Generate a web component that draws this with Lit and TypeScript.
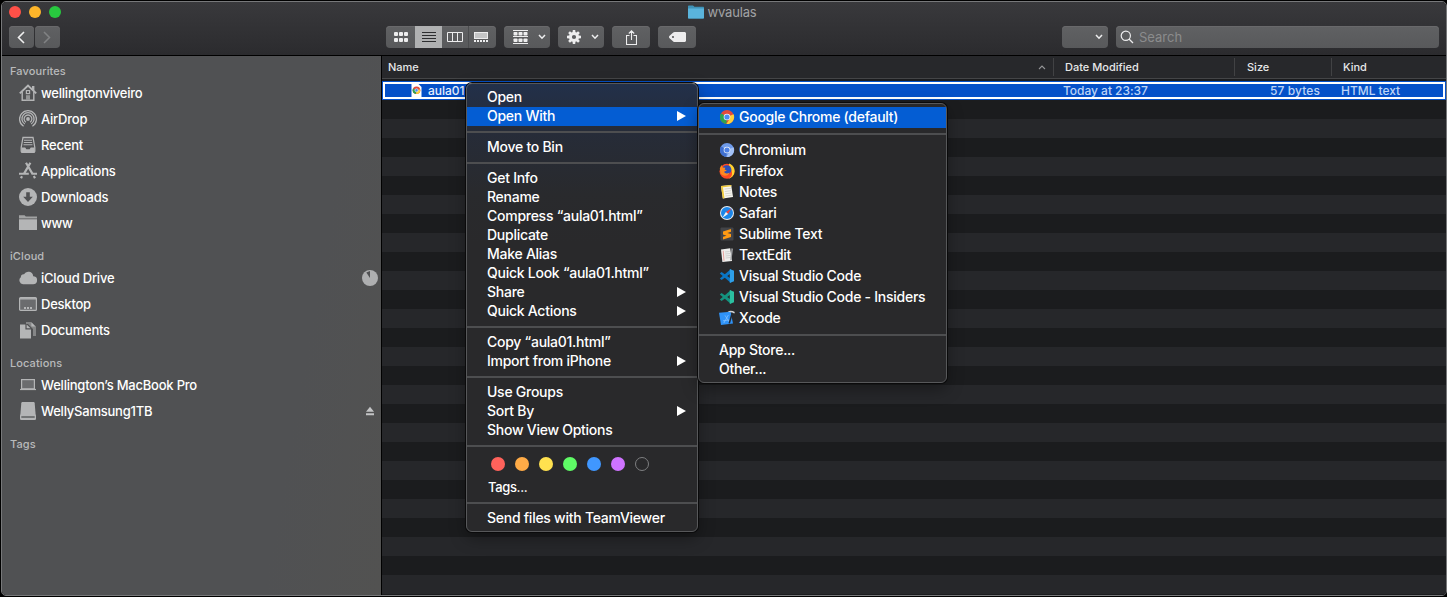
import { LitElement, html, svg, css, nothing, TemplateResult } from "lit";
import { customElement, property } from "lit/decorators.js";
import { classMap } from "lit/directives/class-map.js";

const icon = (w: number, h: number, body: unknown) =>
  html`<svg width=${w} height=${h} viewBox="0 0 ${w} ${h}" fill="none">${body}</svg>`;

const G = "#b4b5b6";

const side: Record<string, TemplateResult> = {
  home: icon(18, 18, svg`<path d="M.8 9.400 9 1.600l8.200 7.800" stroke=${G} stroke-width="2"/><path d="M13 4.800V2h2.400v5" fill=${G}/><path d="M3.200 8v8.300h11.600V8" stroke=${G} stroke-width="1.400"/><rect x="7.400" y="6.600" width="3.200" height="3" stroke=${G} stroke-width="1.200"/><rect x="7" y="11.200" width="4" height="5" fill="#939495"/>`),
  airdrop: icon(18, 18, svg`<g stroke=${G} stroke-width="1.300"><path d="M4.600 16.200a8.400 8.400 0 1 1 8.800 0"/><path d="M5.800 14a6.100 6.100 0 1 1 6.400 0"/><path d="M6.900 12.200a3.900 3.900 0 1 1 4.200 0"/></g><circle cx="9" cy="9" r="1.900" fill=${G}/><path d="m9 10.500 2.400 5.600H6.600z" fill="#505153"/>`),
  recent: icon(18, 18, svg`<path d="M4 1.500h10l1.800 10v3.600a1.200 1.200 0 0 1-1.200 1.200H3.400a1.200 1.200 0 0 1-1.200-1.200v-3.600z" stroke=${G} stroke-width="1.300"/><path d="M5 4.300h8M4.800 6.500h8.400M4.500 8.700h9" stroke=${G} stroke-width="1.100"/><path d="M2.400 11.400h3.800l1.200 1.800h3.200l1.200-1.800h3.800v4.800H2.400z" fill=${G}/>`),
  apps: icon(18, 18, svg`<g stroke=${G} stroke-width="2.200"><path d="m7 .8 6.800 11.600M14.800 14l1.200 2.200M11.400.8 5.200 11.400M3 14.200l-1 2"/><path d="M0 11.700h9.800M13.400 11.700H18" stroke-width="2"/></g>`),
  down: icon(18, 18, svg`<circle cx="9" cy="9" r="9" fill=${G}/><path d="M7.200 4.200h3.600v4.600h3L9 14 4.200 8.800h3z" fill="#505153"/>`),
  folder: icon(18, 18, svg`<path d="M0 1.300h5.600l1.200 1.300H18v2H0z" fill="#a2a3a4"/><path d="M0 5.300h18v10.700H0z" fill=${G}/>`),
  cloud: icon(18, 18, svg`<path d="M4 15.200a4 4 0 0 1-2.200-7A3 3 0 0 1 5 5.300a4.900 4.900 0 0 1 9.200 1.900 4 4 0 0 1-.2 8z" fill=${G}/>`),
  desktop: icon(18, 18, svg`<rect x=".6" y="2.600" width="16.800" height="12.800" rx="1" stroke=${G} stroke-width="1.200" fill="#6b6c6e"/><path d="M1 3.800h16" stroke=${G} stroke-width="1.400"/><path d="M5 12.900h2M8 12.900h2M11 12.900h2" stroke=${G} stroke-width="2"/>`),
  docs: icon(18, 18, svg`<path d="M7 1h5l5 4.400V15h-3V8L9 3H7z" fill="#858687"/><path d="M12.400 1.200v4.200h4z" fill=${G}/><path d="M1 3.400h5.400v5H12V17.400H1z" fill=${G}/><path d="M7.600 3.400v3.800h4z" fill=${G}/>`),
  laptop: icon(18, 18, svg`<rect x="2.600" y="3.600" width="12.800" height="9.200" stroke=${G} stroke-width="1.200" fill="#6b6c6e"/><path d="M1 13.500h16" stroke=${G} stroke-width="1.200"/>`),
  drive: icon(18, 18, svg`<path d="M3.600 0h10.800c.8 0 1.200.4 1.300 1.200l1.100 13.300H1.200L2.300 1.200C2.400.4 2.800 0 3.600 0z" fill=${G}/><rect x="1" y="12.500" width="16" height="5.500" rx="1.200" fill=${G}/><path d="M2.300 14.300h13.400v1.400H2.300z" fill="#58595b"/>`),
};

const chrome = (a: string, b: string, c: string, d: string) => icon(16, 16, svg`
  <circle cx="8" cy="8" r="7" fill=${a}/>
  <path d="M8 8 1.900 4.500A7 7 0 0 0 7.400 15z" fill=${b}/>
  <path d="M8 8 14.600 5.300A7 7 0 0 1 7.400 15L10.800 9.500z" fill=${c}/>
  <path d="M8 8 1.900 4.500 4.800 9.600z" fill=${b}/>
  <circle cx="8" cy="8" r="3.300" fill="#f3f6fb"/><circle cx="8" cy="8" r="2.600" fill=${d}/>`);

const vs = (a: string, b: string) => icon(16, 16, svg`<path d="M.8 5.400 2.600 3.900 12 10.800V15z" fill=${a}/><path d="M.8 10.600 2.600 12.100 12 5.200V1z" fill=${a}/><path d="M10.800 1 15 2.800v10.400L10.800 15z" fill=${b}/>`);

const app: Record<string, TemplateResult> = {
  chrome: chrome("#e24a3b", "#2da451", "#fdd03c", "#4a8cf0"),
  chromium: chrome("#6f9bea", "#3f6fd0", "#a3c2f7", "#4b80e6"),
  firefox: icon(16, 16, svg`<circle cx="8" cy="8.300" r="7.500" fill="#ff4a22"/><path d="M10 .6c3.600 1 5.700 4.200 5.600 7.600A7.500 7.500 0 0 1 8 15.800c4-.5 5.600-3 4.800-7C12.400 5.500 9.800 4 10 .6z" fill="#ffd12e"/><circle cx="7.800" cy="6.800" r="4.600" fill="#2c4fb8"/><path d="M.8 5.500 2.400 2l1.200 2.600 2.800.2-.8 1.800 2.300.8-2.800 1.400c.8 2.300 3.800 2 5.400.7-.6 3.700-7 4.600-9 .8z" fill="#ff8a1f"/>`),
  notes: icon(16, 16, svg`<path d="m2 2.100 10.200-1.200L14 13.100 3.800 14.500z" fill="#f7f6ef"/><path d="m2 2.100 1.800-.2L5.500 14.200 3.800 14.500zM2 2.100l10.200-1.200.2 1.400L2.200 3.500z" fill="#f0c936"/><path d="m5.500 5.100 6.400-.8M5.800 7.500l6.400-.8M6.100 9.800l6.400-.8M6.400 12l6.400-.8" stroke="#c9c8c2" stroke-width=".7"/>`),
  safari: icon(16, 16, svg`<circle cx="8" cy="8" r="7" fill="#e8edf2"/><circle cx="8" cy="8" r="6" fill="#1c86e8"/><path d="m12.600 3.300-3.500 5.700-2.200-2.100z" fill="#f0433a"/><path d="m3.400 12.700 3.500-5.800 2.200 2.100z" fill="#f4f4f4"/>`),
  sublime: icon(16, 16, svg`<rect x="1.500" y="1.500" width="13" height="13" rx="1" fill="#434448"/><path d="m12 3-8 2.500v3l3.600 1.200L4 10.800v2.800l8-2.500V8L8.400 6.900 12 5.800z" fill="#ff9a14"/>`),
  textedit: icon(16, 16, svg`<path d="m2 2.600 9.200-1.400L13 14 3.400 15z" fill="#eeeeec"/><path d="m4.200 3.800.8 10" stroke="#e49a94" stroke-width=".9"/><path d="m6 5 4.600-.5M6.200 7l4.800-.5M6.400 9l4.800-.5M6.600 11l4.800-.5" stroke="#c2c2c2" stroke-width=".7"/><path d="m12.400 1.200 1.600.5-1.400 10.600-1.300 1.200z" fill="#9c9d9f"/>`),
  code: vs("#0a76c4", "#2e9fe8"),
  insiders: vs("#15937f", "#2bc0a0"),
  xcode: icon(16, 16, svg`<path d="M0 2.800 11.600 1.800 14 13.600 2 15z" fill="#2f93f8"/><path d="m4.800 13 4.600-8M6 5.400l4.600 7M4 10.800l7.600-1" stroke="#8cc6ff" stroke-width=".7"/><path d="M8.500 1.600C11 .2 13.500.6 15.800 2l-.4 1.400-2-.6z" fill="#d0d2d4"/><path d="m12.600 2.400 1.500.5L11 13.500l-1.500-.3z" fill="#222a36"/>`),
};

@customElement("finder-sidebar")
class FinderSidebar extends LitElement {
  static styles = css`
    :host { display: block; width: 379px; flex: none; background: linear-gradient(100deg, #505153 75%, #525251); border-right: 1px solid #000; box-sizing: content-box; }
    svg { display: block; flex: none; }
    .head { height: 29px; box-sizing: border-box; padding: 13px 0 0 8px; font-size: 11px; line-height: 14px; font-weight: 500; color: #b9babb; letter-spacing: .1px; }
    .head.first { height: 24px; padding-top: 8px; }
    .item { height: 26px; display: flex; align-items: center; padding: 0 3px 0 17px; gap: 4px; font-size: 13px; font-weight: 550; color: #fff; letter-spacing: -.22px; }
    .label { flex: 1; white-space: nowrap; }
    .eject { margin-right: 3px; }
  `;
  render() {
    const groups: [string, [string, string][]][] = [
      ["Favourites", [["home", "wellingtonviveiro"], ["airdrop", "AirDrop"], ["recent", "Recent"], ["apps", "Applications"], ["down", "Downloads"], ["folder", "www"]]],
      ["iCloud", [["cloud", "iCloud Drive"], ["desktop", "Desktop"], ["docs", "Documents"]]],
      ["Locations", [["laptop", "Wellington’s MacBook Pro"], ["drive", "WellySamsung1TB"]]],
      ["Tags", []],
    ];
    return groups.map(([name, items], i) => html`
      <div class=${classMap({ head: true, first: i === 0 })}>${name}</div>
      ${items.map(([ic, label]) => html`<div class="item">${side[ic]}<span class="label">${label}</span>
        ${ic === "cloud" ? icon(16, 16, svg`<circle cx="8" cy="8" r="8" fill="#aeafb0"/><path d="M8 8V1L4.300 2.400z" fill="#505153"/>`) : nothing}
        ${ic === "drive" ? html`<span class="eject">${icon(10, 10, svg`<path d="M5 .8 9 5.800H1zM1 7.200h8v2H1z" fill="#c4c5c6"/>`)}</span>` : nothing}
      </div>`)}`);
  }
}

interface Entry { label?: string; sep?: boolean; arrow?: boolean; on?: boolean; icon?: string; tags?: boolean; }

@customElement("finder-menu")
class FinderMenu extends LitElement {
  @property({ attribute: false }) entries: Entry[] = [];
  static styles = css`
    :host { display: block; box-sizing: border-box; border: 1px solid #57585a; border-radius: 6px; padding: 4px 0 3px; background: #29292b; box-shadow: 0 0 0 1px #0a0a0b, 0 6px 16px rgba(0,0,0,.35); color: #fff; font-size: 14px; font-weight: 500; }
    :host(.main) { background: linear-gradient(#22304a, #262c39 45px, #292a2d 110px, #29292b 160px); }
    :host(.sub) { padding-top: 3px; }
    svg { display: block; flex: none; }
    .row { height: 19px; padding: 0 11px 0 20px; display: flex; align-items: center; white-space: nowrap; letter-spacing: -.26px; }
    .row.app { height: 21px; gap: 4px; }
    .row.app svg { margin-bottom: 1px; }
    .row.on { background: #045dd3; }
    .label { flex: 1; padding-bottom: 2px; }
    .sep { height: 12px; display: flex; align-items: center; }
    .sep::before { content: ""; flex: 1; height: 2px; background: #4d4e50; }
    .dots { height: 24px; display: flex; align-items: center; gap: 10px; padding-left: 24px; }
    .dot { width: 14px; height: 14px; border-radius: 50%; box-sizing: border-box; }
    .red { background: #ff625b; } .orange { background: #ffab47; } .yellow { background: #ffe14f; } .green { background: #5ffb66; } .blue { background: #4097ff; } .purple { background: #cf73ff; }
    .none { border: 1px solid #7d7e80; }
    .tags { height: 21px; padding: 0 0 0 21px; display: flex; align-items: center; font-size: 13px; letter-spacing: -.35px; }
  `;
  render() {
    return this.entries.map((e) => e.sep ? html`<div class="sep"></div>`
      : e.tags ? html`<div class="dots">${["red", "orange", "yellow", "green", "blue", "purple", "none"].map((c) => html`<span class="dot ${c}"></span>`)}</div><div class="tags">Tags...</div>`
      : html`<div class=${classMap({ row: true, app: !!e.icon, on: !!e.on })}>
          ${e.icon ? app[e.icon] : nothing}<span class="label">${e.label}</span>
          ${e.arrow ? icon(9, 11, svg`<path d="M0 0v10l9-5z" fill="#fff"/>`) : nothing}</div>`);
  }
}

@customElement("app-root")
class AppRoot extends LitElement {
  static styles = css`
    :host { display: block; position: relative; width: 1447px; height: 597px; box-sizing: border-box; overflow: hidden; background: #000; padding: 1px 0 1px 1px; font-family: Inter, "Liberation Sans", sans-serif; }
    svg { display: block; flex: none; }
    .window { height: 595px; box-sizing: border-box; display: flex; flex-direction: column; border: 1px solid #77787a; border-radius: 5px; overflow: hidden; }
    .bar { height: 54px; box-sizing: border-box; flex: none; background: linear-gradient(#39393c, #2b2b2e); border-bottom: 1px solid #000; display: flex; flex-direction: column; }
    .titlebar { height: 20px; display: grid; grid-template-columns: 1fr auto 1fr; align-items: center; padding: 0 11px 0 7px; }
    .lights { display: flex; gap: 8px; }
    .light { width: 12px; height: 12px; border-radius: 50%; }
    .close { background: #ff5048; } .min { background: #fdb52a; } .max { background: #28c83f; }
    .title { display: flex; align-items: center; gap: 4px; font-size: 13px; color: #a2a3a5; letter-spacing: -.2px; }
    .tools { display: flex; align-items: center; padding: 4px 7px 0 7px; height: 22px; }
    .btn { height: 22px; box-sizing: border-box; border-radius: 4px; background: linear-gradient(#606163, #58595b); display: flex; align-items: center; justify-content: center; box-shadow: inset 0 1px #69696b; }
    .nav { width: 25px; margin-right: 1px; }
    .nav svg { margin-right: 1px; }
    .views { margin-left: 325px; width: 110px; overflow: hidden; }
    .seg { height: 22px; display: flex; align-items: center; justify-content: center; width: 27px; box-sizing: border-box; }
    .seg.first { width: 29px; } .seg.sel { background: #b0b1b2; } .seg.line { border-right: 1px solid #4b4c4e; } .seg.last { padding-right: 3px; }
    .drop { width: 46px; margin-left: 8px; gap: 10px; justify-content: flex-start; padding-left: 9px; }
    .wide { width: 38px; margin-left: 8px; }
    .filter { width: 46px; margin-left: auto; justify-content: flex-end; padding-right: 5px; }
    .search { width: 323px; margin-left: 8px; justify-content: flex-start; gap: 5px; padding-left: 4px; color: #8b8c8d; font-size: 13px; }
    .body { flex: 1; display: flex; min-height: 0; }
    .list { flex: 1; min-width: 0; display: flex; flex-direction: column; background: #1b1c1e; }
    .cols { height: 23px; box-sizing: border-box; flex: none; background: #27282b; border-bottom: 1px solid #444547; display: flex; align-items: center; font-size: 11px; font-weight: 500; color: #e6e7e8; letter-spacing: .01px; }
    .col { height: 18px; box-sizing: border-box; display: flex; align-items: center; border-right: 1px solid #414244; }
    .name { width: 672px; padding: 0 7px 0 6px; justify-content: space-between; }
    .date { width: 181px; padding-left: 11px; }
    .size { width: 97px; padding-left: 12px; }
    .kind { padding-left: 11px; border: 0; }
    .rows { flex: 1; margin-top: 2px; background: repeating-linear-gradient(#26272a 0 19px, #1b1c1e 19px 38px); }
    .selected { height: 19px; box-sizing: border-box; border: 1px solid #0450c8; background: #0450c8; }
    .ring { height: 17px; box-sizing: border-box; border: 2px solid #fff; display: flex; align-items: center; overflow: hidden; color: #bcd4f7; font-size: 12px; font-weight: 500; letter-spacing: -.03px; line-height: 14px; white-space: nowrap; }
    .file { width: 678px; box-sizing: border-box; padding-left: 26px; display: flex; align-items: center; gap: 6px; color: #e6effd; }
    .when { width: 181px; }
    .bytes { width: 76px; text-align: right; letter-spacing: .1px; }
    .type { padding-left: 21px; }
    .menu { position: absolute; left: 466px; top: 83px; width: 232px; height: 449px; }
    .submenu { position: absolute; left: 698px; top: 103px; width: 249px; height: 280px; }
  `;
  render() {
    const W = "#ededee";
    const chev = icon(8, 6, svg`<path d="m1 1 3 3.200L7 1" stroke=${W} stroke-width="1.500"/>`);
    const s: Entry = { sep: true };
    const main: Entry[] = [
      { label: "Open" }, { label: "Open With", arrow: true, on: true }, s, { label: "Move to Bin" }, s,
      { label: "Get Info" }, { label: "Rename" }, { label: "Compress “aula01.html”" }, { label: "Duplicate" }, { label: "Make Alias" },
      { label: "Quick Look “aula01.html”" }, { label: "Share", arrow: true }, { label: "Quick Actions", arrow: true }, s,
      { label: "Copy “aula01.html”" }, { label: "Import from iPhone", arrow: true }, s,
      { label: "Use Groups" }, { label: "Sort By", arrow: true }, { label: "Show View Options" }, s,
      { tags: true }, s, { label: "Send files with TeamViewer" },
    ];
    const sub: Entry[] = [
      { label: "Google Chrome (default)", icon: "chrome", on: true }, s,
      { label: "Chromium", icon: "chromium" }, { label: "Firefox", icon: "firefox" }, { label: "Notes", icon: "notes" },
      { label: "Safari", icon: "safari" }, { label: "Sublime Text", icon: "sublime" }, { label: "TextEdit", icon: "textedit" },
      { label: "Visual Studio Code", icon: "code" }, { label: "Visual Studio Code - Insiders", icon: "insiders" }, { label: "Xcode", icon: "xcode" }, s,
      { label: "App Store..." }, { label: "Other..." },
    ];
    const teeth = [0, 45, 90, 135, 180, 225, 270, 315];
    return html`
      <div class="window">
        <div class="bar">
          <div class="titlebar">
            <div class="lights"><span class="light close"></span><span class="light min"></span><span class="light max"></span></div>
            <div class="title">${icon(16, 14, svg`<path d="M0 1.500C0 .8.400.5 1 .5h4l1.500 1.300H15c.6 0 1 .4 1 1V12.500c0 .6-.4 1-1 1H1c-.6 0-1-.4-1-1z" fill="#3f93b8"/><path d="M0 3.600h16v9c0 .6-.4 1-1 1H1c-.6 0-1-.4-1-1z" fill="#5ab4dc"/>`)}<span>wvaulas</span></div>
          </div>
          <div class="tools">
            <div class="btn nav">${icon(8, 13, svg`<path d="M7 1 1.500 6.500 7 12" stroke="#f0f0f0" stroke-width="1.600"/>`)}</div>
            <div class="btn nav">${icon(8, 13, svg`<path d="m1 1 5.500 5.500L1 12" stroke="#818284" stroke-width="1.500"/>`)}</div>
            <div class="btn views">
              <div class="seg first">${icon(14, 10, svg`${[0, 5, 10].map((x) => svg`<rect x=${x} y="0" width="4" height="4" rx="1" fill=${W}/><rect x=${x} y="6" width="4" height="4" rx="1" fill=${W}/>`)}`)}</div>
              <div class="seg sel">${icon(14, 10, svg`<path d="M0 .5h14M0 3.500h14M0 6.500h14M0 9.500h14" stroke="#2d2e30"/>`)}</div>
              <div class="seg line">${icon(16, 10, svg`<path d="M.5.5h15v9H.5zM5.500.5v9M10.500.5v9" stroke=${W}/>`)}</div>
              <div class="seg last">${icon(14, 10, svg`<rect x=".5" y=".5" width="13" height="6" fill="#c4c5c6" stroke=${W}/><path d="M0 9h14" stroke=${W} stroke-width="2" stroke-dasharray="2 1"/>`)}</div>
            </div>
            <div class="btn drop">${icon(15, 14, svg`<path d="M0 .5h15M0 6.500h15M0 13.500h15" stroke=${W}/>${[0.5, 5.500, 10.500].map((x) => svg`<rect x=${x} y="2" width="4" height="3.500" rx=".8" fill=${W}/><rect x=${x} y="8.500" width="4" height="3.500" rx=".8" fill=${W}/>`)}`)}${chev}</div>
            <div class="btn drop">${icon(14, 14, svg`${teeth.map((a) => svg`<path d="M5.800 0h2.400l.5 4H5.300z" fill=${W} transform="rotate(${a} 7 7)"/>`)}<circle cx="7" cy="7" r="3.500" stroke=${W} stroke-width="2.800"/>`)}${chev}</div>
            <div class="btn wide">${icon(11, 15, svg`<path d="M3.500 5.500h-3v9h10v-9h-3M5.500 10V1M2.800 3.500 5.500.8l2.700 2.700" stroke=${W} stroke-width="1.100"/>`)}</div>
            <div class="btn wide">${icon(17, 10, svg`<path fill-rule="evenodd" d="M4.200.6C4.700.2 5 0 5.700 0H15.400c1 0 1.600.6 1.600 1.500v7c0 .9-.6 1.500-1.600 1.500H5.700c-.7 0-1-.2-1.500-.6L.6 6.200c-.8-.7-.8-1.700 0-2.400zM4 3.900a1.100 1.100 0 1 0 0 2.200 1.100 1.100 0 0 0 0-2.200z" fill=${W}/>`)}</div>
            <div class="btn filter">${chev}</div>
            <div class="btn search">${icon(14, 14, svg`<circle cx="5.800" cy="5.800" r="4.600" stroke=${W} stroke-width="1.200"/><path d="m9 9 4 4" stroke=${W} stroke-width="1.300"/>`)}<span>Search</span></div>
          </div>
        </div>
        <div class="body">
          <finder-sidebar></finder-sidebar>
          <div class="list">
            <div class="cols">
              <div class="col name"><span>Name</span>${icon(8, 5, svg`<path d="m1 4 3-3 3 3" stroke="#939496" stroke-width="1.100"/>`)}</div>
              <div class="col date">Date Modified</div><div class="col size">Size</div><div class="col kind">Kind</div>
            </div>
            <div class="rows"><div class="selected"><div class="ring">
              <div class="file">${icon(11, 13, svg`<path d="M.5 0h7l3 3v10H.5z" fill="#fff"/><circle cx="5.500" cy="6.200" r="3.800" fill="#e24a3b"/><path d="M5.500 6.200 2 4.600A3.800 3.800 0 0 0 5.200 10z" fill="#2da451"/><path d="m5.500 6.200 3.700-1A3.800 3.800 0 0 1 5.200 10z" fill="#fdd03c"/><circle cx="5.500" cy="6.200" r="1.600" fill="#4a8cf0" stroke="#fff" stroke-width=".5"/>`)}<span>aula01.html</span></div>
              <div class="when">Today at 23:37</div><div class="bytes">57 bytes</div><div class="type">HTML text</div>
            </div></div></div>
          </div>
        </div>
      </div>
      <finder-menu class="menu main" .entries=${main}></finder-menu>
      <finder-menu class="submenu sub" .entries=${sub}></finder-menu>`;
  }
}
